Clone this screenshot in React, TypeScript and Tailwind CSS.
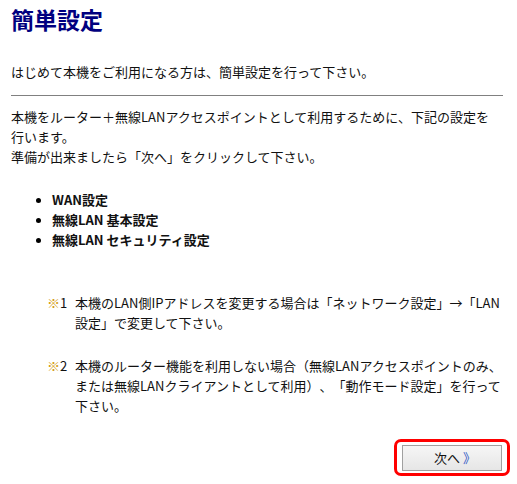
import React from 'react'

const font = { fontFamily: '"Noto Sans CJK JP", "Noto Sans", sans-serif' }

function Note({ mark, children }: { mark: string; children: React.ReactNode }) {
    return (
        <div className="flex pl-[36px]">
            <div className="w-[28px] shrink-0 whitespace-nowrap">
                <span className="text-[#d39c12]">※</span>
                <span>{mark}</span>
            </div>
            <p className="whitespace-nowrap">{children}</p>
        </div>
    )
}

export default function App() {
    const items = ['WAN設定', '無線LAN 基本設定', '無線LAN セキュリティ設定']
    return (
        <div className="w-[517px] h-[484px] bg-white text-[13px] leading-[20px] text-[#111] pt-[4px] px-[11px] overflow-hidden [text-spacing-trim:space-all]" style={font}>
            <h1 className="text-[23px] leading-[30px] font-bold text-[#000080]">簡単設定</h1>

            <p className="mt-[28px]">はじめて本機をご利用になる方は、簡単設定を行って下さい。</p>

            <div className="mt-[13px] w-[492px] border-t border-[#808080]" />

            <p className="mt-[11px] whitespace-nowrap">
                本機をルーター＋無線LANアクセスポイントとして利用するために、下記の設定を<br />
                行います。<br />
                準備が出来ましたら「次へ」をクリックして下さい。
            </p>

            <ul className="mt-[23px] font-bold">
                {items.map((t) => (
                    <li key={t} className="flex items-center pl-[25px]">
                        <span className="w-[5px] h-[5px] rounded-full bg-black shrink-0" />
                        <span className="ml-[11px]">{t}</span>
                    </li>
                ))}
            </ul>

            <div className="mt-[43px]">
                <Note mark="1">
                    本機のLAN側IPアドレスを変更する場合は「ネットワーク設定」→「LAN<br />
                    設定」で変更して下さい。
                </Note>
            </div>

            <div className="mt-[23px]">
                <Note mark="2">
                    本機のルーター機能を利用しない場合（無線LANアクセスポイントのみ、<br />
                    または無線LANクライアントとして利用）、「動作モード設定」を行って<br />
                    下さい。
                </Note>
            </div>

            <div className="mt-[23px] flex justify-end -mr-[4px]">
                <div className="w-[116px] h-[37px] border-[3px] border-[#ff0000] rounded-[7px] flex items-center justify-center">
                    <button className="w-[100px] h-[26px] border border-[#a0a0a0] bg-gradient-to-b from-[#f6f6f6] to-[#e6e6e6] text-[13px] leading-[20px] text-[#111] pl-[6px] [text-spacing-trim:space-all]" style={font}>
                        次へ <span className="text-[#2f55c4]">》</span>
                    </button>
                </div>
            </div>
        </div>
    )
}
